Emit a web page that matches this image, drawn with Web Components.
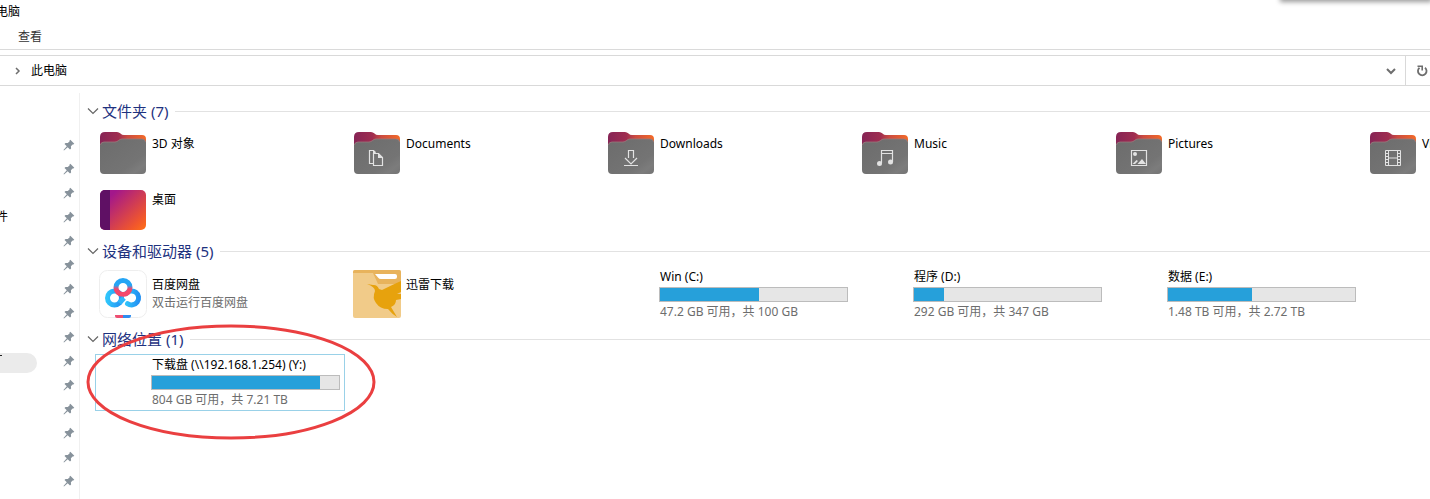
<!DOCTYPE html>
<html lang="zh-CN">
<head>
<meta charset="utf-8">
<title>此电脑</title>
<style>
  html, body {
    margin: 0;
    height: 100%;
  }

  body {
    font-family: "Noto Sans", "Noto Sans CJK SC", sans-serif;
    font-size: 12px;
    line-height: 18px;
    color: #000;
    background: #fff;
    overflow: hidden;
  }
</style>
</head>
<body>
<explorer-window>
  <window-header slot="header" heading="电脑" menu="查看"></window-header>
  <address-bar slot="address">此电脑</address-bar>
  <quick-access slot="nav"></quick-access>

  <item-group label="文件夹 (7)">
    <item-tile icon="folder" name="3D 对象"></item-tile>
    <item-tile icon="documents" name="Documents"></item-tile>
    <item-tile icon="downloads" name="Downloads"></item-tile>
    <item-tile icon="music" name="Music"></item-tile>
    <item-tile icon="pictures" name="Pictures"></item-tile>
    <item-tile icon="videos" name="Videos"></item-tile>
    <item-tile icon="desktop" name="桌面"></item-tile>
  </item-group>

  <item-group label="设备和驱动器 (5)" spaced>
    <item-tile icon="netdisk" name="百度网盘" detail="双击运行百度网盘"></item-tile>
    <item-tile icon="bird" name="迅雷下载"></item-tile>
    <item-tile name="Win (C:)" used="53" detail="47.2 GB 可用，共 100 GB"></item-tile>
    <item-tile name="程序 (D:)" used="16" detail="292 GB 可用，共 347 GB"></item-tile>
    <item-tile name="数据 (E:)" used="45" detail="1.48 TB 可用，共 2.72 TB"></item-tile>
  </item-group>

  <item-group label="网络位置 (1)" spaced>
    <circle-mark>
      <item-tile selected name="下载盘 (\\192.168.1.254) (Y:)" used="90" detail="804 GB 可用，共 7.21 TB"></item-tile>
    </circle-mark>
  </item-group>
</explorer-window>

<script>
const folder = (glyph = "") => `
  <defs>
    <linearGradient id="back" x1="0" x2="1" y1="0" y2="0">
      <stop offset="0" stop-color="#862455"/>
      <stop offset=".4" stop-color="#9f2d50"/>
      <stop offset=".6" stop-color="#cc4c40"/>
      <stop offset="1" stop-color="#f36a28"/>
    </linearGradient>
    <linearGradient id="front" x1="0" x2="1" y1="0" y2="1">
      <stop offset="0" stop-color="#6c6c6c"/>
      <stop offset=".7" stop-color="#747474"/>
      <stop offset=".85" stop-color="#7c7c7c"/>
      <stop offset="1" stop-color="#747474"/>
    </linearGradient>
  </defs>
  <path fill="url(#back)" d="M1 8q0-5 5-5h12q2 0 3.500 1.500T25 6h18q4 0 4 4v14H1z"/>
  <path fill="url(#front)" d="M1 17q0-4 4-4h11c3 0 4-3 7-3h20q4 0 4 4v27q0 4-4 4H5q-4 0-4-4z"/>
  <path fill="none" stroke="#9a7a7c" stroke-width=".8" d="M1.500 16q.5-3 3.500-3h11c3 0 4-3 7-3h20q3 0 3.500 3"/>
  <g fill="none" stroke="#e2e2e2" stroke-width="1.200">${glyph}</g>`;

const ICONS = {
  folder: folder(),
  documents: folder(`
    <path d="M20 34.500h-3.500v-13h4l2 2"/>
    <path d="M20.500 24.500h5l4 4v8h-9z"/>
    <path fill="#e2e2e2" stroke="none" d="M25 24l5 5h-5zM20 21l4 4h-4z"/>`),
  downloads: folder(`
    <path d="M21.500 29v-7.500h5V29M18 29l6 6 6-6M17 36.500h14"/>`),
  music: folder(`
    <path d="M20.500 34V21.500h11V33M20.500 24.500h11"/>
    <circle cx="18.500" cy="34.500" r="2.500" fill="#e2e2e2" stroke="none"/>
    <circle cx="29.500" cy="33" r="2.500" fill="#e2e2e2" stroke="none"/>`),
  pictures: folder(`
    <path d="M16.500 21.500h15v15h-15z"/>
    <circle cx="20" cy="25" r="2" fill="#e2e2e2" stroke="none"/>
    <path fill="#e2e2e2" stroke="none" d="M22.500 35l4.500-5 4 5zM17.500 35l4-4 1.500 1-3 3z"/>`),
  videos: folder(`
    <path stroke-width="1" d="M16.500 21.500h15v15h-15zM19.500 21v16M28.500 21v16M19.500 29h9"/>
    <path stroke-width="1" d="M17 24.500h2M17 27.500h2M17 30.500h2M17 33.500h2M29 24.500h2M29 27.500h2M29 30.500h2M29 33.500h2"/>`),
  desktop: `
    <defs>
      <linearGradient id="desk" x1="0" y1="0" x2="1" y2=".9">
        <stop offset=".2" stop-color="#a3178b"/>
        <stop offset=".85" stop-color="#f0562d"/>
        <stop offset="1" stop-color="#fc6a1c"/>
      </linearGradient>
      <clipPath id="round"><rect x="1" y="5" width="46" height="40" rx="5"/></clipPath>
    </defs>
    <g clip-path="url(#round)">
      <path fill="url(#desk)" d="M1 5h46v40H1z"/>
      <path fill="#5f1064" d="M1 5h10v40H1z"/>
    </g>`,
  netdisk: `
    <defs>
      <linearGradient id="ring" x1="0" y1="0" x2="0" y2="1">
        <stop offset=".35" stop-color="#25a5f5"/>
        <stop offset=".6" stop-color="#f3476b"/>
      </linearGradient>
      <linearGradient id="blue" x1="0" y1="0" x2="1" y2="0">
        <stop offset="0" stop-color="#2fc4fb"/>
        <stop offset="1" stop-color="#2391f2"/>
      </linearGradient>
    </defs>
    <rect x=".5" y=".5" width="47" height="47" rx="8" fill="#fff" stroke="#eee"/>
    <g fill="none" stroke-width="5">
      <circle cx="15.500" cy="28" r="7" stroke="url(#blue)"/>
      <path stroke="url(#blue)" stroke-linecap="round" d="M27 23.700a7 7 0 1 1 1.500 9.900"/>
      <circle cx="24" cy="17.500" r="7" stroke="url(#ring)"/>
      <path stroke="#2fb5fa" d="M20.300 33l4.700-5"/>
    </g>
    <path fill="#ee4f72" d="M16 45h8v3h-6q-2 0-2-2z"/>
    <path fill="#2f8df0" d="M24 45h8v1q0 2-2 2h-6z"/>`,
  bird: `
    <rect width="48" height="48" rx="2" fill="#f1cb89"/>
    <path fill="#e8b35c" d="M2 0h44q2 0 2 2v12H25L20 3H0V2q0-2 2-2z"/>
    <path fill="#fff" d="M22 4h20q2 0 2 2v1q0 2-2 2H28q-2 0-3-1.500z"/>
    <path fill="#e7a20d" d="M14 14l6 1q4-.5 6 4l3 1q10-5 19-9v11l-4 2 4 0v5l-5 1q0 5-5 7l6 10q-5-3-9-8-8 0-12-6-4-5-1-12 0-4-8-7z"/>`
};

class ExplorerWindow extends HTMLElement {
  constructor() {
    super();
    this.attachShadow({ mode: "open" }).innerHTML = `
      <style>
        :host {
          position: relative;
          display: flex;
          flex-direction: column;
          height: 100%;
          overflow: hidden;
        }
        .body {
          display: flex;
          flex: 1;
          min-height: 0;
          margin-top: 7px;
        }
        main {
          flex: 1;
          min-width: 0;
          padding-top: 4px;
          border-left: 1px solid #f0f0f0;
          overflow: hidden;
        }
        .shade {
          position: absolute;
          right: 0;
          bottom: 100%;
          width: 148px;
          height: 8px;
          box-shadow: 0 0 5px 2px rgba(0, 0, 0, 0.4);
        }
      </style>
      <slot name="header"></slot>
      <slot name="address"></slot>
      <div class="body">
        <slot name="nav"></slot>
        <main><slot></slot></main>
      </div>
      <div class="shade"></div>
    `;
  }
}

class WindowHeader extends HTMLElement {
  connectedCallback() {
    this.attachShadow({ mode: "open" }).innerHTML = `
      <style>
        :host {
          display: block;
          border-bottom: 1px solid #dadada;
        }
        .title {
          display: flex;
          justify-content: flex-end;
          width: 20px;
          line-height: 24px;
          white-space: nowrap;
          overflow: hidden;
        }
        button {
          all: unset;
          display: block;
          padding: 0 18px;
          line-height: 25px;
          color: #333;
          cursor: pointer;
        }
      </style>
      <div class="title">${this.getAttribute("heading")}</div>
      <button type="button">${this.getAttribute("menu")}</button>
    `;
  }
}

class AddressBar extends HTMLElement {
  constructor() {
    super();
    this.attachShadow({ mode: "open" }).innerHTML = `
      <style>
        :host {
          display: flex;
          align-items: stretch;
          height: 29px;
          margin-top: 5px;
          border: solid #d9d9d9;
          border-width: 1px 0;
        }
        button {
          all: unset;
          display: flex;
          align-items: center;
          justify-content: center;
          cursor: pointer;
        }
        svg {
          fill: none;
          stroke: #6e6e6e;
          stroke-width: 2;
        }
        .sep { width: 18px; padding-left: 9px; }
        .crumb { padding-left: 4px; }
        .history { width: 29px; margin-left: auto; }
        .refresh {
          width: 24px;
          padding-left: 4px;
          margin-right: -4px;
          border-left: 1px solid #d9d9d9;
        }
      </style>
      <button class="sep" type="button" aria-label="展开">
        <svg width="6" height="8" viewBox="0 0 6 8"><path stroke-width="1.500" d="M1 1l3 3-3 3"/></svg>
      </button>
      <button class="crumb" type="button"><slot></slot></button>
      <button class="history" type="button" aria-label="以前的位置">
        <svg width="10" height="8" viewBox="0 0 10 8"><path d="M1 2l4 4 4-4"/></svg>
      </button>
      <button class="refresh" type="button" aria-label="刷新">
        <svg width="12" height="12" viewBox="0 0 12 12">
          <path stroke-width="1.800" d="M9 2.700A4.300 4.300 0 1 1 3.500 2.700"/>
          <path stroke-width="1.600" d="M1.500 1.300h4.700V5.500"/>
        </svg>
      </button>
    `;
  }
}

class QuickAccess extends HTMLElement {
  connectedCallback() {
    const pin = `
      <svg width="12" height="12" viewBox="0 0 12 12">
        <path fill="#87929b" d="M7.300.8l4 3.900-1 .9-.7-.2-1.700 1.900.2 2.200-1.100 1-2.300-2.200L1 11.500l-.5-.5 3.300-3.700L1.500 5l1-1.100 2.300.2 1.900-1.800-.3-.6z"/>
      </svg>`;
    const rows = Array.from({ length: 15 }, (_, i) => {
      let label = "";
      if (i === 3) label = "件";
      if (i === 9) label = `<i class="mark"></i><i class="smudge"></i>`;
      return `<li><span>${label}</span>${pin}</li>`;
    });

    this.attachShadow({ mode: "open" }).innerHTML = `
      <style>
        :host {
          display: block;
          width: 79px;
        }
        ul {
          margin: 0;
          padding: 40px 4px 0 0;
          list-style: none;
        }
        li {
          position: relative;
          display: flex;
          align-items: center;
          justify-content: space-between;
          height: 24px;
        }
        span {
          display: flex;
          justify-content: flex-end;
          width: 8px;
        }
        .smudge {
          position: absolute;
          left: -10px;
          top: 4px;
          width: 47px;
          height: 20px;
          border-radius: 10px;
          background: #ebebeb;
        }
        .mark {
          position: absolute;
          left: 0;
          top: 6px;
          width: 2px;
          height: 1px;
          background: #222;
          z-index: 1;
        }
      </style>
      <ul>${rows.join("")}</ul>
    `;
  }
}

class ItemGroup extends HTMLElement {
  connectedCallback() {
    this.attachShadow({ mode: "open" }).innerHTML = `
      <style>
        :host {
          display: block;
          padding: 0 0 1px 15px;
        }
        :host([spaced]) { padding-bottom: 4px; }
        :host([spaced]) .head { padding-bottom: 2px; }
        :host([closed]) .tiles { display: none; }
        .head {
          display: flex;
          align-items: center;
          gap: 7px;
          box-sizing: border-box;
          height: 28px;
          margin-left: -8px;
        }
        .head::after {
          content: "";
          flex: 1;
          height: 1px;
          background: #e2e2e2;
        }
        button {
          all: unset;
          display: flex;
          align-items: center;
          gap: 3px;
          font-size: 15px;
          line-height: 20px;
          color: #1e327f;
          white-space: nowrap;
          cursor: pointer;
        }
        .tiles {
          display: grid;
          grid-template-columns: repeat(6, 250px);
          grid-auto-rows: 56px;
          column-gap: 4px;
        }
      </style>
      <div class="head">
        <button type="button">
          <svg width="12" height="8" viewBox="0 0 12 8" fill="none" stroke="#666"><path stroke-width="1.200" d="M1 1.500l5 5 5-5"/></svg>
          ${this.getAttribute("label")}
        </button>
      </div>
      <div class="tiles"><slot></slot></div>
    `;

    this.shadowRoot.querySelector("button").addEventListener("click", () => {
      this.toggleAttribute("closed");
    });
  }
}

class ItemTile extends HTMLElement {
  connectedCallback() {
    const name = this.getAttribute("name");
    const detail = this.getAttribute("detail");
    const used = this.getAttribute("used");
    const icon = ICONS[this.getAttribute("icon")] || "";

    this.attachShadow({ mode: "open" }).innerHTML = `
      <style>
        :host { display: block; }
        a {
          display: flex;
          gap: 4px;
          padding: 3px 4px 3px 3px;
          border: 1px solid transparent;
          color: inherit;
          text-decoration: none;
          white-space: nowrap;
        }
        :host([selected]) a { border-color: #99d1e8; }
        svg {
          flex: none;
          display: block;
        }
        .text {
          flex: 1;
          min-width: 0;
          padding-top: 6px;
        }
        :host([used]) .text {
          margin: -2px 0;
          padding-top: 0;
        }
        .name, .detail { padding-left: 1px; }
        .detail { color: #6d6d6d; }
        progress {
          appearance: none;
          display: block;
          box-sizing: border-box;
          width: 100%;
          height: 15px;
          margin: 1px 0;
          border: 1px solid #bcbcbc;
          background: #e6e6e6;
        }
        progress::-webkit-progress-bar { background: #e6e6e6; }
        progress::-webkit-progress-value { background: #26a0da; }
      </style>
      <a href="#">
        <svg width="48" height="48" viewBox="0 0 48 48" aria-hidden="true">${icon}</svg>
        <div class="text">
          <div class="name">${name}</div>
          ${used ? `<progress max="100" value="${used}" aria-label="${name}"></progress>` : ""}
          ${detail ? `<div class="detail">${detail}</div>` : ""}
        </div>
      </a>
    `;
  }
}

// Hand-drawn style ellipse around whatever is slotted in
class CircleMark extends HTMLElement {
  constructor() {
    super();
    this.attachShadow({ mode: "open" }).innerHTML = `
      <style>
        :host {
          position: relative;
          display: block;
        }
        svg {
          position: absolute;
          left: -9px;
          top: -30px;
          width: 290px;
          height: 116px;
          pointer-events: none;
        }
      </style>
      <slot></slot>
      <svg viewBox="0 0 290 116" fill="none" stroke="#ea3f40" stroke-width="3" aria-hidden="true">
        <ellipse cx="145" cy="58" rx="143" ry="56"/>
      </svg>
    `;
  }
}

customElements.define("explorer-window", ExplorerWindow);
customElements.define("window-header", WindowHeader);
customElements.define("address-bar", AddressBar);
customElements.define("quick-access", QuickAccess);
customElements.define("item-group", ItemGroup);
customElements.define("item-tile", ItemTile);
customElements.define("circle-mark", CircleMark);
</script>
</body>
</html>
